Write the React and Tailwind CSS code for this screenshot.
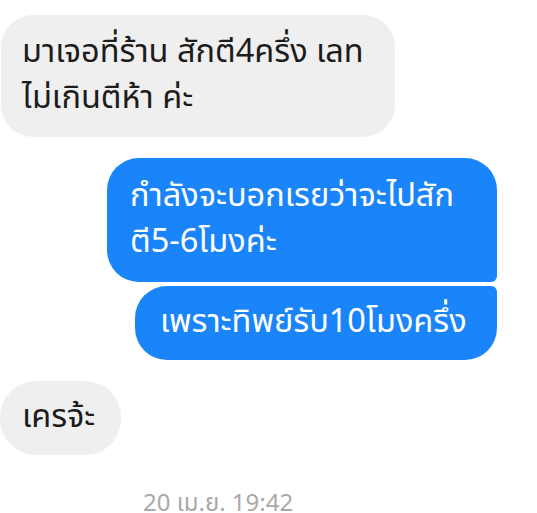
import React from "react";

const font = { fontFamily: '"Noto Sans Thai", "Noto Sans", "DejaVu Sans", sans-serif' };

const App = () => {
  return (
    <div className="w-[537px] h-[513px] overflow-hidden bg-white" style={font}>
      <div className="flex flex-col pt-[15px] text-[32.5px] leading-[46px]">

        {/* Incoming */}
        <div className="w-[394px] ml-[1px] bg-[#efefef] text-[#1c1c1c] rounded-[32px] pl-[21px] py-[15px] whitespace-nowrap">
          มาเจอที่ร้าน สักตี4ครึ่ง เลท
          <br />
          ไม่เกินตีห้า ค่ะ
        </div>

        {/* Outgoing */}
        <div className="flex flex-col items-end pr-[40px] mt-[21px] gap-[4px]">
          <div className="w-[390px] bg-[#1a84fb] text-white rounded-[32px] rounded-br-[6px] pl-[23px] py-[16px] whitespace-nowrap">
            กำลังจะบอกเรยว่าจะไปสัก
            <br />
            ตี5-6โมงค่ะ
          </div>
          <div className="w-[362px] bg-[#1a84fb] text-white rounded-[32px] rounded-tr-[6px] pl-[25px] py-[14px] whitespace-nowrap">
            เพราะทิพย์รับ10โมงครึ่ง
          </div>
        </div>

        {/* Incoming */}
        <div className="w-[121px] mt-[21px] bg-[#efefef] text-[#1c1c1c] rounded-[36px] pl-[22px] py-[14px] whitespace-nowrap">
          เครจ้ะ
        </div>

        {/* Timestamp */}
        <div className="mt-[27px] pl-[143px] text-[24px] leading-[45px] text-[#a9a9a9] whitespace-nowrap">
          20 เม.ย. 19:42
        </div>
      </div>
    </div>
  );
};

export default App;
